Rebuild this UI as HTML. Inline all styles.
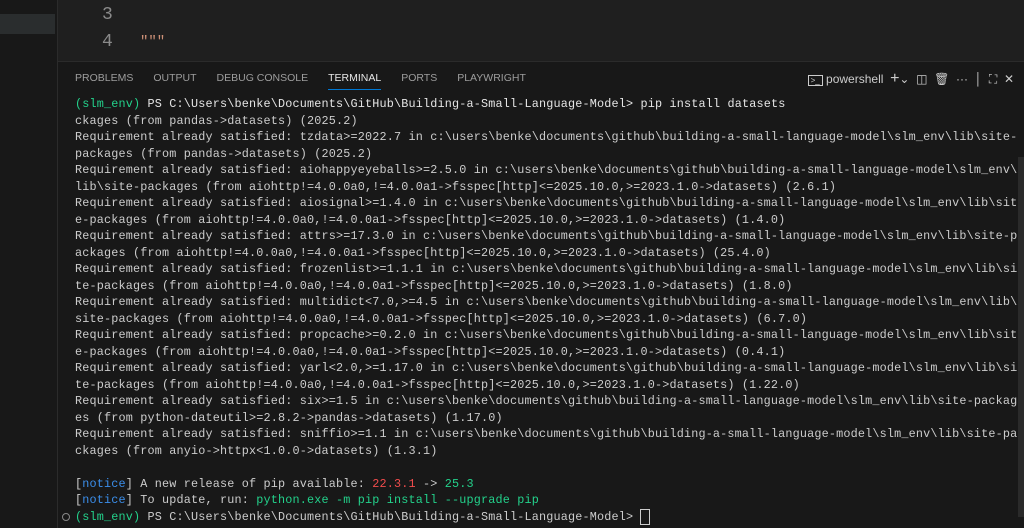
<!DOCTYPE html><html><head><style>
body{margin:0;width:1024px;height:528px;background:#1f1f1f;overflow:hidden;position:relative;font-family:"Liberation Sans",sans-serif}
.side{position:absolute;left:0;top:0;width:57px;height:528px;background:#181818;border-right:1px solid #2b2b2b}
.sel{position:absolute;left:0;top:14px;width:55px;height:20px;background:#2a2d2e}
.ln{position:absolute;left:102px;color:#8a8a8a;font:18px "Liberation Mono",monospace}
.panel{position:absolute;left:58px;top:61px;right:0;bottom:0;background:#181818;border-top:1px solid #2b2b2b}
.tabs{position:absolute;top:10px;left:17px;font-size:10.5px;color:#9d9d9d;white-space:nowrap}
.tabs span{margin-right:20px}
.tabs .act{color:#e7e7e7;border-bottom:1px solid #0078d4;padding-bottom:5px}
.term{position:absolute;left:17px;top:34px;font:11.8px/16.52px "Liberation Mono",monospace;letter-spacing:0.17px;color:#cccccc;white-space:pre}
.g{color:#23d18b}.b{color:#3b8eea}.r{color:#f14c4c}.w{color:#e5e5e5}
.icons{position:absolute;top:8px;right:10px;color:#ccc;font-size:12px;white-space:nowrap}
.sb{position:absolute;right:0;top:95px;width:6px;height:360px;background:#2a2a2a}
</style></head><body>
<div class="side"><div class="sel"></div></div>
<div class="ln" style="top:5px">3</div>
<div class="ln" style="top:32px">4</div>
<div style="position:absolute;left:140px;top:34px;color:#ce9178;font:14px 'Liberation Mono',monospace">"""</div>
<div class="panel">
<div class="tabs"><span>PROBLEMS</span><span>OUTPUT</span><span>DEBUG CONSOLE</span><span class="act">TERMINAL</span><span>PORTS</span><span>PLAYWRIGHT</span></div>
<div class="icons"><span style="border:1px solid #ccc;font-size:8px;padding:0 2px">&gt;_</span> powershell &nbsp;<span style="font-size:16px">+</span>⌄ &nbsp;◫ &nbsp;🗑 &nbsp;··· &nbsp;│ &nbsp;⛶ &nbsp;✕</div>
<div class="sb"></div>
<div class="term"><span class="g">(slm_env)</span> <span class="w">PS C:\Users\benke\Documents\GitHub\Building-a-Small-Language-Model&gt; pip install datasets</span>
ckages (from pandas-&gt;datasets) (2025.2)
Requirement already satisfied: tzdata&gt;=2022.7 in c:\users\benke\documents\github\building-a-small-language-model\slm_env\lib\site-
packages (from pandas-&gt;datasets) (2025.2)
Requirement already satisfied: aiohappyeyeballs&gt;=2.5.0 in c:\users\benke\documents\github\building-a-small-language-model\slm_env\
lib\site-packages (from aiohttp!=4.0.0a0,!=4.0.0a1-&gt;fsspec[http]&lt;=2025.10.0,&gt;=2023.1.0-&gt;datasets) (2.6.1)
Requirement already satisfied: aiosignal&gt;=1.4.0 in c:\users\benke\documents\github\building-a-small-language-model\slm_env\lib\sit
e-packages (from aiohttp!=4.0.0a0,!=4.0.0a1-&gt;fsspec[http]&lt;=2025.10.0,&gt;=2023.1.0-&gt;datasets) (1.4.0)
Requirement already satisfied: attrs&gt;=17.3.0 in c:\users\benke\documents\github\building-a-small-language-model\slm_env\lib\site-p
ackages (from aiohttp!=4.0.0a0,!=4.0.0a1-&gt;fsspec[http]&lt;=2025.10.0,&gt;=2023.1.0-&gt;datasets) (25.4.0)
Requirement already satisfied: frozenlist&gt;=1.1.1 in c:\users\benke\documents\github\building-a-small-language-model\slm_env\lib\si
te-packages (from aiohttp!=4.0.0a0,!=4.0.0a1-&gt;fsspec[http]&lt;=2025.10.0,&gt;=2023.1.0-&gt;datasets) (1.8.0)
Requirement already satisfied: multidict&lt;7.0,&gt;=4.5 in c:\users\benke\documents\github\building-a-small-language-model\slm_env\lib\
site-packages (from aiohttp!=4.0.0a0,!=4.0.0a1-&gt;fsspec[http]&lt;=2025.10.0,&gt;=2023.1.0-&gt;datasets) (6.7.0)
Requirement already satisfied: propcache&gt;=0.2.0 in c:\users\benke\documents\github\building-a-small-language-model\slm_env\lib\sit
e-packages (from aiohttp!=4.0.0a0,!=4.0.0a1-&gt;fsspec[http]&lt;=2025.10.0,&gt;=2023.1.0-&gt;datasets) (0.4.1)
Requirement already satisfied: yarl&lt;2.0,&gt;=1.17.0 in c:\users\benke\documents\github\building-a-small-language-model\slm_env\lib\si
te-packages (from aiohttp!=4.0.0a0,!=4.0.0a1-&gt;fsspec[http]&lt;=2025.10.0,&gt;=2023.1.0-&gt;datasets) (1.22.0)
Requirement already satisfied: six&gt;=1.5 in c:\users\benke\documents\github\building-a-small-language-model\slm_env\lib\site-packag
es (from python-dateutil&gt;=2.8.2-&gt;pandas-&gt;datasets) (1.17.0)
Requirement already satisfied: sniffio&gt;=1.1 in c:\users\benke\documents\github\building-a-small-language-model\slm_env\lib\site-pa
ckages (from anyio-&gt;httpx&lt;1.0.0-&gt;datasets) (1.3.1)

[<span class="b">notice</span>] A new release of pip available: <span class="r">22.3.1</span> -&gt; <span class="g">25.3</span>
[<span class="b">notice</span>] To update, run: <span class="g">python.exe -m pip install --upgrade pip</span>
<span class="g">(slm_env)</span> PS C:\Users\benke\Documents\GitHub\Building-a-Small-Language-Model&gt; <span style="border:1px solid #ccc">&nbsp;</span></div>
<div style="position:absolute;left:4px;top:451px;width:6px;height:6px;border:1px solid #888;border-radius:50%"></div>
</div>
</body></html>
